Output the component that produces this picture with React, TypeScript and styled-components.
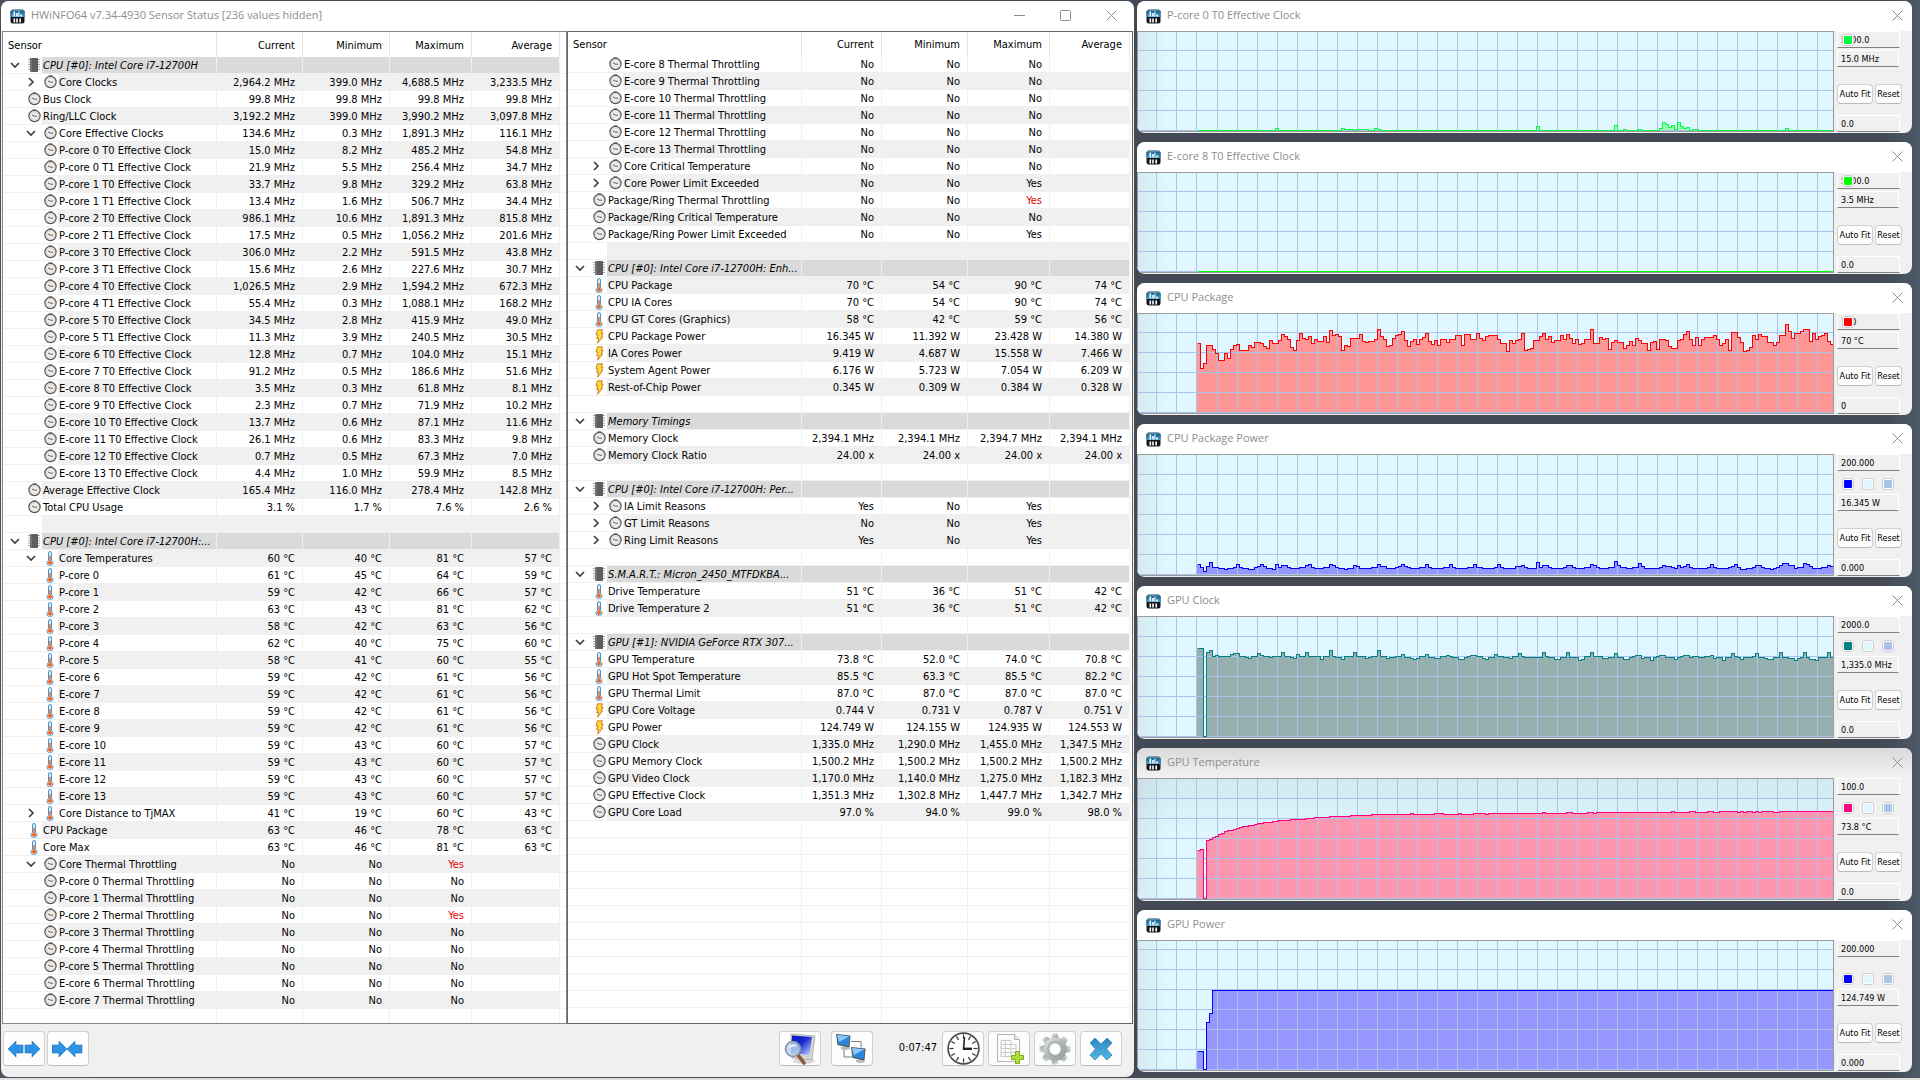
import styled, { createGlobalStyle, css } from 'styled-components';

const uiFont = '"DejaVu Sans Condensed", "DejaVu Sans", sans-serif';
const titleFont = '"Open Sans", "Noto Sans", sans-serif';
const line = '#f0f0f0';

const GlobalStyle = createGlobalStyle`
  *, *::before, *::after { box-sizing: border-box; }
  body { margin: 0; background: #454b57; font: 11px ${uiFont}; color: #000; }
  button, input { font: inherit; color: inherit; margin: 0; }
`;

/* ---------- shell ---------- */

const Screen = styled.div`
  display: flex;
  flex-direction: column;
  height: 100vh;
  background: linear-gradient(to right, #4a515d, #434955 60%, #434955 98%, #4d5a68);
`;

const Desktop = styled.main`
  flex: 1;
  min-height: 0;
  display: grid;
  grid-template-columns: 1133fr 775fr;
  gap: 3px;
  padding: 1px 8px 1px 1px;
`;

const TaskbarEdge = styled.footer`
  height: 2px;
  background: #dedede;
`;

const Frame = styled.section`
  display: flex;
  flex-direction: column;
  min-width: 0;
  border-radius: 8px;
  overflow: hidden;
  background: #f0f0f0;
`;

const TitleBar = styled.header<{ $shaded?: boolean }>`
  flex: none;
  display: flex;
  align-items: center;
  height: 30px;
  padding-left: 9px;
  background: ${p => (p.$shaded ? 'linear-gradient(#dadada, #f2f2f2)' : '#fff')};
`;

const Title = styled.h1`
  flex: 1;
  margin: 0 0 0 6px;
  padding-bottom: 2px;
  font: 400 11px/16px ${titleFont};
  color: #8e8e8e;
  white-space: nowrap;
`;

const CaptionButton = styled.button<{ $narrow?: boolean }>`
  display: grid;
  place-items: center;
  width: ${p => (p.$narrow ? 30 : 46)}px;
  height: 30px;
  padding: 0 0 2px;
  border: 0;
  background: none;
`;

const Panes = styled.div`
  flex: 1;
  min-height: 0;
  display: grid;
  grid-template-columns: 565fr 566fr;
  padding: 0 1px;
`;

const Pane = styled.div<{ $edge: string }>`
  border: 1px solid ${p => p.$edge};
  background: #fff;
  min-width: 0;
  min-height: 0;
  overflow: hidden;
`;

/* ---------- sensor list ---------- */

const SensorTable = styled.table`
  width: 100%;
  table-layout: fixed;
  border-collapse: separate;
  border-spacing: 0;
`;

const HeadCell = styled.th<{ $tall: boolean; $first?: boolean; $last?: boolean }>`
  height: ${p => (p.$tall ? 25 : 24)}px;
  padding: ${p => (p.$first ? '2px 0 0 5px' : '2px 7px 0 0')};
  text-align: ${p => (p.$first ? 'left' : 'right')};
  font-weight: 400;
  line-height: 16px;
  border-right: ${p => (p.$last ? '0' : '1px solid #e5e5e5')};
`;

type Tone = 'white' | 'grey' | 'group';
const tones: Record<Tone, string> = { white: '#fff', grey: '#f0f0f0', group: '#dadada' };

const Cell = styled.td<{ $tone: Tone; $alert?: boolean }>`
  height: 17px;
  padding: 2px 7px 0 0;
  line-height: 14px;
  text-align: right;
  white-space: nowrap;
  background: ${p => tones[p.$tone]};
  color: ${p => (p.$alert ? '#e60000' : '#000')};
  border-right: 1px solid ${line};
  border-bottom: 1px solid ${line};
`;

const NameCell = styled.td`
  height: 17px;
  padding: 0;
  border-right: 1px solid ${line};
  border-bottom: 1px solid ${line};
`;

const TailCell = styled.td`
  padding: 0;
  border-bottom: 1px solid ${line};
`;

const NameRow = styled.div<{ $level: number }>`
  display: flex;
  align-items: center;
  height: 16px;
  padding-left: ${p => 4 + (p.$level - 1) * 16}px;
`;

const Toggle = styled.button`
  display: grid;
  place-items: center;
  width: 16px;
  height: 16px;
  padding: 0;
  border: 0;
  background: none;
`;

const ToggleSpace = styled.span`
  width: 16px;
`;

const IconSlot = styled.span`
  flex: none;
  display: grid;
  place-items: center;
  width: 16px;
  height: 16px;
  margin-left: 3px;
`;

const Label = styled.span<{ $tone: Tone }>`
  flex: 1;
  min-width: 0;
  height: 16px;
  padding: 2px 0 0 1px;
  line-height: 14px;
  white-space: nowrap;
  overflow: hidden;
  background: ${p => tones[p.$tone]};
  font-style: ${p => (p.$tone === 'group' ? 'italic' : 'normal')};
`;

/* ---------- toolbar ---------- */

const Toolbar = styled.div`
  flex: none;
  display: flex;
  height: 53px;
  padding: 7px 12px 0 2px;
`;

const ToolGroup = styled.div<{ $gap: number; $push?: boolean }>`
  display: flex;
  align-items: flex-start;
  gap: ${p => p.$gap}px;
  ${p => p.$push && css`margin-left: auto;`}
`;

const ToolButton = styled.button`
  display: grid;
  place-items: center;
  width: 42px;
  height: 35px;
  padding: 0;
  border: 1px solid #d0d0d0;
  border-bottom-color: #bcbcbc;
  border-radius: 4px;
  background: #fdfdfd;
`;

const Elapsed = styled.time`
  margin: 0 5px 0 26px;
  line-height: 34px;
`;

/* ---------- graph windows ---------- */

const GraphColumn = styled.div`
  display: flex;
  flex-direction: column;
  gap: 9px;
  min-width: 0;
`;

const GraphBody = styled.div<{ $height: number }>`
  display: flex;
  height: ${p => p.$height}px;
`;

const Plot = styled.div<{ $shaded?: boolean }>`
  flex: 1;
  min-width: 0;
  margin-bottom: 1px;
  border: 1px solid #9b9b9b;
  background:
    linear-gradient(${p => (p.$shaded ? 'rgba(0, 0, 0, 0.06), transparent 60px' : 'transparent, transparent')}),
    linear-gradient(to right, rgba(0, 20, 40, 0.05), transparent 30px),
    #e0f7ff;
`;

const PlotSvg = styled.svg`
  display: block;
  width: 100%;
  height: 100%;
`;

const Side = styled.div`
  display: flex;
  flex-direction: column;
  width: 78px;
  padding-left: 3px;
  font: 9px ${uiFont};
`;

const fieldStyle = css`
  flex: none;
  display: block;
  width: 63px;
  height: 17px;
  padding: 0 3px;
  border: 1px solid #fff;
  border-bottom: 1px solid #808080;
  background: #f0f0f0;
  line-height: 15px;
`;

const RangeInput = styled.input<{ $top?: boolean }>`
  ${fieldStyle}
  margin: ${p => (p.$top ? '0 0 auto' : '11px 0 1px')};
`;

const Reading = styled.output`
  ${fieldStyle}
  width: 62px;
  margin-bottom: 17px;
  line-height: 17px;
`;

const Swatches = styled.div<{ $overlap: boolean }>`
  flex: none;
  position: relative;
  display: flex;
  gap: 8px;
  padding-left: 5px;
  margin-top: ${p => (p.$overlap ? -15 : 0)}px;
  margin-bottom: 4px;
`;

const Swatch = styled.button<{ $color: string }>`
  width: 12px;
  height: 12px;
  padding: 1px;
  border: 1px solid #cfcfcf;
  border-radius: 3px;
  background:
    linear-gradient(${p => p.$color}, ${p => p.$color}) content-box,
    #fdfdfd;
`;

const SideButtons = styled.div`
  display: flex;
  gap: 2px;
`;

const SideButton = styled.button<{ $width: number }>`
  width: ${p => p.$width}px;
  height: 20px;
  padding: 0;
  border: 1px solid #cfcfcf;
  border-bottom-color: #bababa;
  border-radius: 4px;
  background: #fdfdfd;
  text-align: center;
  white-space: nowrap;
`;

/* ---------- icons ---------- */

const AppIcon = () => (
  <svg width="15" height="15" viewBox="0 0 15 15" aria-hidden="true">
    <defs>
      <linearGradient id="appTop" x1="0" y1="0" x2="0" y2="1">
        <stop offset="0" stopColor="#8fb4c6" />
        <stop offset="0.25" stopColor="#1d6a94" />
        <stop offset="1" stopColor="#3fa0d0" />
      </linearGradient>
    </defs>
    <rect x="0.5" y="0.5" width="14" height="14" rx="2.5" fill="#10161c" />
    <path d="M3 0.5h9a2.5 2.5 0 0 1 2.5 2.5v5h-14V3A2.5 2.5 0 0 1 3 0.5z" fill="url(#appTop)" />
    <path d="M3.5 2.5h1.6v5H3.5zM6.2 4h1.6v3.5H6.2zM8.4 2.5h1v5h-1zM10.2 5.5h1.6v2h-1.6z" fill="#fff" />
    <path d="M3.5 9.5h1.6v4H3.5zM6.2 9.5h1.6v4H6.2zM9.4 9.5H11v4H9.4z" fill="#fff" />
  </svg>
);

const CloseGlyph = () => (
  <svg width="11" height="11" viewBox="0 0 11 11" aria-hidden="true">
    <path d="M0.5 0.5l10 10M10.5 0.5l-10 10" stroke="#8c8c8c" fill="none" />
  </svg>
);

const ClockIcon = () => (
  <svg width="13" height="14" viewBox="0 0 13 14" aria-hidden="true">
    <path d="M4.500 0.500h4" stroke="#9a9a9a" />
    <circle cx="6.500" cy="7" r="5.600" fill="#ececec" stroke="#565656" strokeWidth="1.200" />
    <circle cx="6.500" cy="7" r="4.200" fill="none" stroke="#d6d6d6" strokeWidth="0.800" />
    <path d="M4 6l2.500 1.200H9" stroke="#6a5a54" fill="none" strokeWidth="1" />
  </svg>
);

const ThermoIcon = () => (
  <svg width="8" height="15" viewBox="0 0 8 15" aria-hidden="true">
    <path d="M2.500 2a1.500 1.500 0 0 1 3 0v7.500a3 3 0 1 1-3 0z" fill="#d8efff" stroke="#4f93c4" />
    <path d="M3.300 5h1.400v5a2 2 0 1 1-1.400 0z" fill="#f0641e" />
  </svg>
);

const BoltIcon = () => (
  <svg width="9" height="15" viewBox="0 0 9 15" aria-hidden="true">
    <path d="M2.500 0.800h5L6.300 4.300h1.900L6.300 8h1.300L2.600 14.200 3.700 9.500H1.600L3 6H1z" fill="#ffd83a" stroke="#c9761a" strokeWidth="0.900" />
  </svg>
);

const ChipIcon = () => (
  <svg width="12" height="14" viewBox="0 0 12 14" aria-hidden="true">
    <path d="M0 1.500h12M0 4h12M0 6.500h12M0 9h12M0 11.500h12" stroke="#a5a5a5" />
    <rect x="2" y="0" width="8" height="14" fill="#5e5e62" />
    <rect x="2" y="0" width="2" height="14" fill="#737378" />
  </svg>
);

const Chevron = ({ open }: { open: boolean }) => (
  <svg width="10" height="10" viewBox="0 0 10 10" aria-hidden="true">
    <path d={open ? 'M1 3l4 4 4-4' : 'M3 1l4 4-4 4'} fill="none" stroke="#404040" strokeWidth="1.700" />
  </svg>
);

const arrowLeft = 'M0 9L8 1v4h7v8H8v4z';
const arrowRight = 'M15 9L7 1v4H0v8h7v4z';

const ExpandIcon = () => (
  <svg width="32" height="18" viewBox="0 0 32 18" aria-hidden="true">
    <g fill="#2f92e4" stroke="#1d74bd" strokeWidth="0.600">
      <path d={arrowLeft} />
      <path d={arrowRight} transform="translate(17 0)" />
    </g>
  </svg>
);

const ShrinkIcon = () => (
  <svg width="32" height="18" viewBox="0 0 32 18" aria-hidden="true">
    <g fill="#2f92e4" stroke="#1d74bd" strokeWidth="0.600">
      <path d={arrowRight} />
      <path d={arrowLeft} transform="translate(15 0)" />
    </g>
  </svg>
);

const MonitorSearchIcon = () => (
  <svg width="32" height="32" viewBox="0 0 32 32" aria-hidden="true">
    <defs>
      <linearGradient id="crt" x1="0" y1="0" x2="1" y2="1">
        <stop offset="0" stopColor="#0a14c8" />
        <stop offset="0.450" stopColor="#1a2ad0" />
        <stop offset="1" stopColor="#cfe0ff" />
      </linearGradient>
    </defs>
    <ellipse cx="20" cy="28" rx="11" ry="3" fill="#d9d9d9" />
    <path d="M7 1l24 2-3 24-20-2z" fill="#d4d4d0" stroke="#a9a9a6" strokeWidth="0.800" />
    <path d="M8 2.500l20 1.500-2.500 18L7 20z" fill="url(#crt)" />
    <path d="M14 22l6 8" stroke="#8a5634" strokeWidth="3.600" strokeLinecap="round" />
    <circle cx="9" cy="16" r="7.500" fill="#b9d2f2" fillOpacity="0.850" stroke="#8793a3" strokeWidth="1.600" />
    <path d="M5 15q3-4 7-2" stroke="#f4f9ff" strokeWidth="1.600" fill="none" />
  </svg>
);

const Screenlet = ({ x, y }: { x: number; y: number }) => (
  <g transform={`translate(${x} ${y})`}>
    <path d="M5 14l7-1 2 3q-5 2-9 0z" fill="#b9bcbf" />
    <path d="M0 1l14.500 1.500-1 12L1.500 12z" fill="#50565c" />
    <path d="M1 2l12.500 1.300-0.800 9.700L2.300 11z" fill="#2b86dc" />
    <path d="M1 2l12.500 1.300L3 9z" fill="#8cc8f8" />
  </g>
);

const NetworkIcon = () => (
  <svg width="32" height="32" viewBox="0 0 32 32" aria-hidden="true">
    <path d="M15 8.500h10v6M8 17v7h8" fill="none" stroke="#7d7d7d" />
    <Screenlet x={0} y={0} />
    <Screenlet x={15} y={13} />
  </svg>
);

const BigClockIcon = () => (
  <svg width="33" height="33" viewBox="0 0 33 33" aria-hidden="true">
    <circle cx="16.500" cy="16.500" r="15.400" fill="#fff" stroke="#4a4a4a" strokeWidth="1.600" />
    {Array.from({ length: 12 }, (_, i) => (
      <path key={i} d="M16.500 2.500v4" stroke="#333" strokeWidth="1.200" transform={`rotate(${i * 30} 16.500 16.500)`} />
    ))}
    <path d="M16.500 17.500L17.500 5" stroke="#222" strokeWidth="1.600" />
    <path d="M16 16.800h9" stroke="#222" strokeWidth="2.400" />
  </svg>
);

const SheetIcon = () => (
  <svg width="30" height="31" viewBox="0 0 30 31" aria-hidden="true">
    <path d="M3.500 1.500h17l5 5v22h-22z" fill="#fbfbfb" stroke="#b4b4b4" />
    <path d="M20.500 1.500v5h5" fill="#e9e9e9" stroke="#b4b4b4" />
    <path d="M7 7.500h10M7 11.500h15M7 15.500h15M7 19.500h15M7 23.500h10M7 7.500v16M11.500 7.500v16M17 7.500v16M22 11.500v8" fill="none" stroke="#cccccc" />
    <path d="M21.500 18.500h4v4h4v4h-4v4h-4v-4h-4v-4h4z" fill="#b4dc3c" stroke="#7fae1c" />
  </svg>
);

const GearIcon = () => (
  <svg width="32" height="32" viewBox="0 0 32 32" aria-hidden="true">
    <defs>
      <linearGradient id="steel" x1="0" y1="0" x2="1" y2="1">
        <stop offset="0" stopColor="#e2e6e6" />
        <stop offset="0.500" stopColor="#b3b9ba" />
        <stop offset="1" stopColor="#8f9697" />
      </linearGradient>
    </defs>
    <g fill="url(#steel)">
      {Array.from({ length: 8 }, (_, i) => (
        <path key={i} d="M13.500 0.500h5l2 7h-9z" transform={`rotate(${i * 45} 16 16)`} />
      ))}
      <circle cx="16" cy="16" r="11.500" />
    </g>
    <circle cx="16" cy="16" r="7.500" fill="#8f9697" />
    <circle cx="16" cy="16" r="6.700" fill="#c9cfd0" />
    <circle cx="16" cy="16" r="5.200" fill="#fff" />
  </svg>
);

const ExitIcon = () => (
  <svg width="24" height="24" viewBox="0 0 24 24" aria-hidden="true">
    <defs>
      <linearGradient id="exit" x1="0" y1="0" x2="0" y2="1">
        <stop offset="0" stopColor="#2d86bd" />
        <stop offset="1" stopColor="#55b6ea" />
      </linearGradient>
    </defs>
    <path d="M6 1l6 6 6-6 5 5-5.500 6 5.500 6-5 5-6-6-6 6-5-5 5.500-6L1 6z" fill="url(#exit)" stroke="#2b7cae" strokeWidth="0.700" strokeLinejoin="round" />
  </svg>
);

/* ---------- sensor data ---------- */

type Kind = 'clock' | 'temp' | 'power';
type Row =
  | { type: 'gap' }
  | { type: 'group'; name: string }
  | { type: 'item'; kind: Kind; level: number; state: '' | 'open' | 'closed'; name: string; values: string[] };

const kinds: Record<string, Kind> = { c: 'clock', t: 'temp', p: 'power' };
const states: Record<string, '' | 'open' | 'closed'> = { '-': '', v: 'open', '>': 'closed' };

/* One sensor per line: kind, level, toggle | name | unit | four readings.
   A line that starts with # opens a group, an empty line is a spacer. */
const parse = (source: string): Row[] =>
  source.trim().split('\n').map(raw => {
    const text = raw.trim();
    if (!text) return { type: 'gap' };
    if (text.startsWith('#')) return { type: 'group', name: text.slice(1) };
    const [flags, name, unit, list] = text.split('|');
    return {
      type: 'item',
      kind: kinds[flags[0]],
      level: Number(flags[1]),
      state: states[flags[2]],
      name,
      values: list.split(' ').map(v => (unit ? `${v} ${unit}` : v)),
    };
  });

const leftRows = parse(`
#CPU [#0]: Intel Core i7-12700H
c2>|Core Clocks|MHz|2,964.2 399.0 4,688.5 3,233.5
c1-|Bus Clock|MHz|99.8 99.8 99.8 99.8
c1-|Ring/LLC Clock|MHz|3,192.2 399.0 3,990.2 3,097.8
c2v|Core Effective Clocks|MHz|134.6 0.3 1,891.3 116.1
c2-|P-core 0 T0 Effective Clock|MHz|15.0 8.2 485.2 54.8
c2-|P-core 0 T1 Effective Clock|MHz|21.9 5.5 256.4 34.7
c2-|P-core 1 T0 Effective Clock|MHz|33.7 9.8 329.2 63.8
c2-|P-core 1 T1 Effective Clock|MHz|13.4 1.6 506.7 34.4
c2-|P-core 2 T0 Effective Clock|MHz|986.1 10.6 1,891.3 815.8
c2-|P-core 2 T1 Effective Clock|MHz|17.5 0.5 1,056.2 201.6
c2-|P-core 3 T0 Effective Clock|MHz|306.0 2.2 591.5 43.8
c2-|P-core 3 T1 Effective Clock|MHz|15.6 2.6 227.6 30.7
c2-|P-core 4 T0 Effective Clock|MHz|1,026.5 2.9 1,594.2 672.3
c2-|P-core 4 T1 Effective Clock|MHz|55.4 0.3 1,088.1 168.2
c2-|P-core 5 T0 Effective Clock|MHz|34.5 2.8 415.9 49.0
c2-|P-core 5 T1 Effective Clock|MHz|11.3 3.9 240.5 30.5
c2-|E-core 6 T0 Effective Clock|MHz|12.8 0.7 104.0 15.1
c2-|E-core 7 T0 Effective Clock|MHz|91.2 0.5 186.6 51.6
c2-|E-core 8 T0 Effective Clock|MHz|3.5 0.3 61.8 8.1
c2-|E-core 9 T0 Effective Clock|MHz|2.3 0.7 71.9 10.2
c2-|E-core 10 T0 Effective Clock|MHz|13.7 0.6 87.1 11.6
c2-|E-core 11 T0 Effective Clock|MHz|26.1 0.6 83.3 9.8
c2-|E-core 12 T0 Effective Clock|MHz|0.7 0.5 67.3 7.0
c2-|E-core 13 T0 Effective Clock|MHz|4.4 1.0 59.9 8.5
c1-|Average Effective Clock|MHz|165.4 116.0 278.4 142.8
c1-|Total CPU Usage|%|3.1 1.7 7.6 2.6

#CPU [#0]: Intel Core i7-12700H:...
t2v|Core Temperatures|°C|60 40 81 57
t2-|P-core 0|°C|61 45 64 59
t2-|P-core 1|°C|59 42 66 57
t2-|P-core 2|°C|63 43 81 62
t2-|P-core 3|°C|58 42 63 56
t2-|P-core 4|°C|62 40 75 60
t2-|P-core 5|°C|58 41 60 55
t2-|E-core 6|°C|59 42 61 56
t2-|E-core 7|°C|59 42 61 56
t2-|E-core 8|°C|59 42 61 56
t2-|E-core 9|°C|59 42 61 56
t2-|E-core 10|°C|59 43 60 57
t2-|E-core 11|°C|59 43 60 57
t2-|E-core 12|°C|59 43 60 57
t2-|E-core 13|°C|59 43 60 57
t2>|Core Distance to TjMAX|°C|41 19 60 43
t1-|CPU Package|°C|63 46 78 63
t1-|Core Max|°C|63 46 81 63
c2v|Core Thermal Throttling||No No Yes!
c2-|P-core 0 Thermal Throttling||No No No
c2-|P-core 1 Thermal Throttling||No No No
c2-|P-core 2 Thermal Throttling||No No Yes!
c2-|P-core 3 Thermal Throttling||No No No
c2-|P-core 4 Thermal Throttling||No No No
c2-|P-core 5 Thermal Throttling||No No No
c2-|E-core 6 Thermal Throttling||No No No
c2-|E-core 7 Thermal Throttling||No No No
`);

const rightRows = parse(`
c2-|E-core 8 Thermal Throttling||No No No
c2-|E-core 9 Thermal Throttling||No No No
c2-|E-core 10 Thermal Throttling||No No No
c2-|E-core 11 Thermal Throttling||No No No
c2-|E-core 12 Thermal Throttling||No No No
c2-|E-core 13 Thermal Throttling||No No No
c2>|Core Critical Temperature||No No No
c2>|Core Power Limit Exceeded||No No Yes
c1-|Package/Ring Thermal Throttling||No No Yes!
c1-|Package/Ring Critical Temperature||No No No
c1-|Package/Ring Power Limit Exceeded||No No Yes

#CPU [#0]: Intel Core i7-12700H: Enh...
t1-|CPU Package|°C|70 54 90 74
t1-|CPU IA Cores|°C|70 54 90 74
t1-|CPU GT Cores (Graphics)|°C|58 42 59 56
p1-|CPU Package Power|W|16.345 11.392 23.428 14.380
p1-|IA Cores Power|W|9.419 4.687 15.558 7.466
p1-|System Agent Power|W|6.176 5.723 7.054 6.209
p1-|Rest-of-Chip Power|W|0.345 0.309 0.384 0.328

#Memory Timings
c1-|Memory Clock|MHz|2,394.1 2,394.1 2,394.7 2,394.1
c1-|Memory Clock Ratio|x|24.00 24.00 24.00 24.00

#CPU [#0]: Intel Core i7-12700H: Per...
c2>|IA Limit Reasons||Yes No Yes
c2>|GT Limit Reasons||No No Yes
c2>|Ring Limit Reasons||Yes No Yes

#S.M.A.R.T.: Micron_2450_MTFDKBA...
t1-|Drive Temperature|°C|51 36 51 42
t1-|Drive Temperature 2|°C|51 36 51 42

#GPU [#1]: NVIDIA GeForce RTX 307...
t1-|GPU Temperature|°C|73.8 52.0 74.0 70.8
t1-|GPU Hot Spot Temperature|°C|85.5 63.3 85.5 82.2
t1-|GPU Thermal Limit|°C|87.0 87.0 87.0 87.0
p1-|GPU Core Voltage|V|0.744 0.731 0.787 0.751
p1-|GPU Power|W|124.749 124.155 124.935 124.553
c1-|GPU Clock|MHz|1,335.0 1,290.0 1,455.0 1,347.5
c1-|GPU Memory Clock|MHz|1,500.2 1,500.2 1,500.2 1,500.2
c1-|GPU Video Clock|MHz|1,170.0 1,140.0 1,275.0 1,182.3
c1-|GPU Effective Clock|MHz|1,351.3 1,302.8 1,447.7 1,342.7
c1-|GPU Core Load|%|97.0 94.0 99.0 98.0
`);

const rowCount = 57;
const kindIcon = { clock: <ClockIcon />, temp: <ThermoIcon />, power: <BoltIcon /> };

const SensorRow = ({ row, tone }: { row: Row; tone: Tone }) => {
  const values = row.type === 'item' ? row.values : [];
  return (
    <tr>
      <NameCell>
        <NameRow $level={row.type === 'item' ? row.level : 1}>
          {row.type === 'group' || (row.type === 'item' && row.state) ? (
            <Toggle aria-label={`Toggle ${row.name}`}>
              <Chevron open={row.type === 'group' || row.state === 'open'} />
            </Toggle>
          ) : (
            <ToggleSpace />
          )}
          <IconSlot>
            {row.type === 'group' && <ChipIcon />}
            {row.type === 'item' && kindIcon[row.kind]}
          </IconSlot>
          <Label $tone={tone}>{row.type !== 'gap' && row.name}</Label>
        </NameRow>
      </NameCell>
      {[0, 1, 2, 3].map(i => {
        const value = values[i] ?? '';
        return (
          <Cell key={i} $tone={tone} $alert={value.endsWith('!')}>
            {value.replace('!', '')}
          </Cell>
        );
      })}
      <TailCell />
    </tr>
  );
};

interface SensorListProps {
  rows: Row[];
  columns: number[];
  tall: boolean;
  toneOf: (index: number) => Tone;
}

const SensorList = ({ rows, columns, tall, toneOf }: SensorListProps) => (
  <SensorTable>
    <colgroup>
      {columns.map((w, i) => <col key={i} width={w} />)}
      <col />
    </colgroup>
    <thead>
      <tr>
        <HeadCell $tall={tall} $first scope="col">Sensor</HeadCell>
        {['Current', 'Minimum', 'Maximum', 'Average'].map(h => (
          <HeadCell key={h} $tall={tall} scope="col">{h}</HeadCell>
        ))}
        <HeadCell as="td" $tall={tall} $last />
      </tr>
    </thead>
    <tbody>
      {Array.from({ length: rowCount }, (_, i) => {
        const row: Row = rows[i] ?? { type: 'gap' };
        const tone: Tone = row.type === 'group' ? 'group' : i < rows.length ? toneOf(i) : 'white';
        return <SensorRow key={i} row={row} tone={tone} />;
      })}
    </tbody>
  </SensorTable>
);

/* ---------- graph data: "x,y" marks where each plotted level begins ---------- */

const traces = {
  pcore: '59,98 137,96 139,98 203,96 206,97 215,98 219,97 230,98 236,96 239,97 242,98 398,94 400,98 476,93 479,98 485,97 488,98 500,97 502,98 521,96 524,90 527,92 530,95 533,93 536,97 539,90 542,94 545,96 549,95 551,98 554,97 560,98 647,96 650,98',
  ecore: '59,98',
  cpu: '59,29 62,54 66,49 69,31 73,33 75,35 77,39 80,46 87,39 89,44 93,35 96,31 99,30 101,36 111,31 113,33 117,28 122,29 125,32 128,34 131,26 135,29 141,26 144,20 146,22 149,25 152,33 155,36 159,26 162,19 164,24 167,25 170,22 173,29 177,25 179,27 184,26 186,22 188,28 191,16 194,21 198,20 200,22 203,36 207,31 209,32 213,24 221,20 224,27 227,28 230,27 237,25 239,15 242,22 245,25 248,32 252,31 255,24 258,21 260,20 264,17 266,26 269,32 273,27 276,25 278,30 282,25 285,23 287,19 290,27 293,30 297,26 299,31 303,25 308,28 312,25 317,21 323,31 327,20 332,25 339,19 341,24 343,26 348,22 350,21 359,25 361,22 363,29 368,37 372,26 374,29 377,26 380,25 383,19 385,36 389,35 392,34 395,26 401,22 404,19 407,25 410,22 413,28 416,26 423,21 425,25 428,20 431,24 434,29 437,25 439,30 443,29 447,25 452,15 455,29 461,23 463,25 466,24 469,35 473,28 477,26 479,28 484,34 489,31 492,27 494,31 497,24 500,26 502,29 509,36 512,28 515,27 517,35 521,25 527,26 530,32 533,34 540,26 543,25 545,20 549,17 551,25 553,31 557,23 559,31 564,25 567,23 575,21 578,25 580,31 585,29 587,25 589,36 593,18 598,23 601,28 604,37 609,36 611,33 615,21 617,25 621,20 623,22 628,28 635,31 639,28 641,21 648,10 650,17 652,24 657,19 663,17 665,15 671,27 675,19 677,25 680,22 683,21 686,19 688,27 692,30',
  cpuPower: '59,109 62,112 65,116 69,111 71,107 74,112 80,113 86,114 90,113 95,112 98,109 101,112 105,113 111,114 115,112 119,111 122,109 125,111 128,113 134,114 137,109 140,112 144,110 148,112 152,113 161,112 167,110 171,109 173,112 176,113 185,112 191,109 195,110 197,112 200,113 205,114 210,113 215,110 218,111 221,113 234,112 239,109 242,111 248,113 258,112 261,111 264,109 267,111 270,112 272,113 282,112 287,109 290,112 293,113 306,112 311,109 314,112 318,113 330,112 336,109 339,112 343,113 355,112 360,109 362,112 366,113 378,111 384,110 386,112 389,113 398,107 401,112 404,110 409,112 413,113 425,112 428,110 434,112 437,113 446,112 452,109 455,110 457,112 462,113 470,112 476,106 479,110 481,112 488,113 494,112 500,108 503,111 507,113 521,112 524,110 527,111 533,112 535,111 537,113 539,110 541,112 545,111 549,109 551,112 555,113 569,112 573,109 575,112 579,113 589,112 594,111 597,109 599,112 603,114 609,113 615,112 617,110 623,112 625,113 631,114 635,113 639,112 641,110 644,108 650,110 655,113 659,112 665,108 668,109 671,111 673,113 684,112 689,110 692,111',
  gpuClock: '59,31 65,119 69,35 71,33 74,39 77,38 80,39 93,37 95,36 101,39 106,40 109,41 114,39 120,36 122,38 125,39 130,40 135,39 143,35 146,39 151,40 155,41 159,37 161,39 167,35 170,39 181,42 186,39 191,33 194,39 197,40 203,42 207,39 215,35 218,39 226,41 231,40 233,39 239,33 242,39 247,41 252,40 257,39 263,37 266,40 271,41 274,42 279,41 281,39 287,37 290,40 295,41 303,39 308,38 311,39 315,40 320,42 326,40 329,39 333,38 338,39 344,41 347,42 351,40 356,37 359,39 365,40 371,41 375,39 380,36 383,39 385,40 404,35 407,39 409,40 415,42 422,40 428,35 431,40 439,43 443,42 447,39 452,35 455,39 464,41 471,40 476,36 479,40 485,42 491,40 495,39 497,38 503,41 507,40 511,43 515,40 519,39 521,38 527,40 535,42 540,40 542,39 546,38 551,40 555,39 559,40 567,39 572,38 575,41 579,40 583,43 588,40 593,36 596,39 599,40 603,42 606,40 615,39 617,36 620,40 625,41 629,42 635,40 641,35 644,40 649,41 655,43 659,41 663,40 665,35 668,40 671,42 677,43 681,40 689,35 692,40',
  gpuTemp: '59,71 62,70 65,119 69,61 71,60 74,58 77,57 80,55 83,54 86,52 90,51 95,50 98,49 101,48 104,47 110,46 116,45 119,44 125,43 134,42 140,41 152,40 167,39 176,38 191,37 212,36 233,35 273,34 275,35 296,34 305,35 321,34 323,35 335,34 347,35 351,34 404,33 407,34 428,33 434,34 449,33 455,34 459,33 533,32 535,33 551,32 557,33 569,32 575,33 581,32 599,33 602,32 604,33 609,32 613,33 618,32 620,33 623,32 635,33 641,32',
  gpuPower: '59,110 65,128 69,81 71,72 74,49',
};

interface Graph {
  title: string;
  body: number;
  max: string;
  min: string;
  reading: string;
  color: string;
  fill: string;
  trace: string;
  shaded?: boolean;
}

const graphs: Graph[] = [
  { title: 'P-core 0 T0 Effective Clock', body: 102, max: '5000.0', min: '0.0', reading: '15.0 MHz', color: '#00ff40', fill: '#96ffb0', trace: traces.pcore },
  { title: 'E-core 8 T0 Effective Clock', body: 102, max: '5000.0', min: '0.0', reading: '3.5 MHz', color: '#00ff00', fill: '#96ff96', trace: traces.ecore },
  { title: 'CPU Package', body: 102, max: '100', min: '0', reading: '70 °C', color: '#ff0000', fill: '#ff9696', trace: traces.cpu },
  { title: 'CPU Package Power', body: 123, max: '200.000', min: '0.000', reading: '16.345 W', color: '#0000ff', fill: '#9696ff', trace: traces.cpuPower },
  { title: 'GPU Clock', body: 123, max: '2000.0', min: '0.0', reading: '1,335.0 MHz', color: '#008080', fill: '#96b0b0', trace: traces.gpuClock },
  { title: 'GPU Temperature', body: 123, max: '100.0', min: '0.0', reading: '73.8 °C', color: '#ff0080', fill: '#ff96b0', trace: traces.gpuTemp, shaded: true },
  { title: 'GPU Power', body: 132, max: '200.000', min: '0.000', reading: '124.749 W', color: '#0000ff', fill: '#9696ff', trace: traces.gpuPower },
];

const plotEnd = 695;
const sampleWidth = 3;
const firstSample = 59;
const gridColumns = [18, 38, 58, ...Array.from({ length: 31 }, (_, i) => 79 + i * 20)];

/* Every sample is three pixels wide, so each level starts on a sample edge. */
const stepPath = (trace: string) => {
  const levels = new Map<number, number>();
  trace.split(' ').forEach(p => {
    const [x, y] = p.split(',').map(Number);
    levels.set(firstSample + Math.round((x - firstSample) / sampleWidth) * sampleWidth, y);
  });
  const [first, ...rest] = [...levels];
  return `M${first[0]} ${first[1]}` + rest.map(([x, y]) => `H${x}V${y}`).join('') + `H${plotEnd}`;
};

const Trace = ({ graph }: { graph: Graph }) => {
  const height = graph.body - 3;
  const rows: number[] = [];
  for (let y = height - 1; y > 0; y -= 20) rows.push(y);
  const path = stepPath(graph.trace);
  return (
    <PlotSvg role="img" aria-label={`${graph.title} history`} shapeRendering="crispEdges">
      <path d={`${path}V${height - 1}H${firstSample}z`} fill={graph.fill} />
      <g fill="#a9c3ea">
        {gridColumns.map(x => <rect key={x} x={x} y="0" width="1" height={height} />)}
        {rows.map(y => <rect key={y} x="0" y={y} width={plotEnd} height="1" />)}
      </g>
      <path d={path} fill="none" stroke={graph.color} transform="translate(0.500 0.500)" />
    </PlotSvg>
  );
};

const GraphWindow = ({ graph }: { graph: Graph }) => (
  <Frame>
    <TitleBar $shaded={graph.shaded}>
      <AppIcon />
      <Title as="h2">{graph.title}</Title>
      <CaptionButton $narrow aria-label="Close"><CloseGlyph /></CaptionButton>
    </TitleBar>
    <GraphBody $height={graph.body}>
      <Plot $shaded={graph.shaded}><Trace graph={graph} /></Plot>
      <Side>
        <RangeInput $top aria-label="Scale maximum" defaultValue={graph.max} />
        <Swatches $overlap={graph.body < 110}>
          <Swatch $color={graph.color} aria-label="Line colour" />
          {graph.body > 110 && (
            <>
              <Swatch $color="#e0f7ff" aria-label="Background colour" />
              <Swatch $color="#a9c3ea" aria-label="Grid colour" />
            </>
          )}
        </Swatches>
        <Reading>{graph.reading}</Reading>
        <SideButtons>
          <SideButton $width={36}>Auto Fit</SideButton>
          <SideButton $width={27}>Reset</SideButton>
        </SideButtons>
        <RangeInput aria-label="Scale minimum" defaultValue={graph.min} />
      </Side>
    </GraphBody>
  </Frame>
);

export default function App() {
  return (
    <Screen>
      <GlobalStyle />
      <Desktop>
        <Frame>
          <TitleBar>
            <AppIcon />
            <Title>HWiNFO64 v7.34-4930 Sensor Status [236 values hidden]</Title>
            <CaptionButton aria-label="Minimize">
              <svg width="11" height="11" viewBox="0 0 11 11" aria-hidden="true"><path d="M0 5.500h11" stroke="#8c8c8c" /></svg>
            </CaptionButton>
            <CaptionButton aria-label="Maximize">
              <svg width="11" height="11" viewBox="0 0 11 11" aria-hidden="true"><rect x="0.500" y="0.500" width="10" height="10" rx="1" fill="none" stroke="#8c8c8c" /></svg>
            </CaptionButton>
            <CaptionButton aria-label="Close"><CloseGlyph /></CaptionButton>
          </TitleBar>
          <Panes>
            <Pane $edge="#828790">
              <SensorList rows={leftRows} columns={[214, 86, 87, 82, 88]} tall toneOf={i => (i % 2 ? 'grey' : 'white')} />
            </Pane>
            <Pane $edge="#646464">
              <SensorList
                rows={rightRows}
                columns={[234, 80, 86, 82, 80]}
                tall={false}
                toneOf={i => (i % 2 === (i < 28 ? 1 : 0) ? 'grey' : 'white')}
              />
            </Pane>
          </Panes>
          <Toolbar>
            <ToolGroup $gap={2}>
              <ToolButton aria-label="Expand columns"><ExpandIcon /></ToolButton>
              <ToolButton aria-label="Shrink columns"><ShrinkIcon /></ToolButton>
            </ToolGroup>
            <ToolGroup $gap={10} $push>
              <ToolButton aria-label="System summary"><MonitorSearchIcon /></ToolButton>
              <ToolButton aria-label="Remote sensors"><NetworkIcon /></ToolButton>
            </ToolGroup>
            <Elapsed>0:07:47</Elapsed>
            <ToolGroup $gap={4}>
              <ToolButton aria-label="Reset clock"><BigClockIcon /></ToolButton>
              <ToolButton aria-label="Start logging"><SheetIcon /></ToolButton>
              <ToolButton aria-label="Settings"><GearIcon /></ToolButton>
              <ToolButton aria-label="Exit"><ExitIcon /></ToolButton>
            </ToolGroup>
          </Toolbar>
        </Frame>
        <GraphColumn>
          {graphs.map(graph => <GraphWindow key={graph.title} graph={graph} />)}
        </GraphColumn>
      </Desktop>
      <TaskbarEdge />
    </Screen>
  );
}
